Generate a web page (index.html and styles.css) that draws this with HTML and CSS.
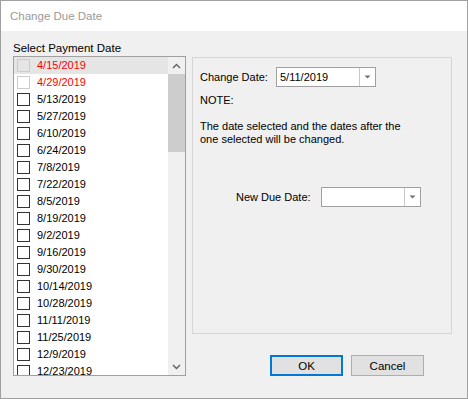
FILE: index.html
```html
<!DOCTYPE html>
<html>
<head>
<meta charset="utf-8">
<link rel="stylesheet" href="styles.css">
</head>
<body>
<div class="window">
  <div class="titlebar">Change Due Date</div>
  <div class="content">
    <div class="left">
      <div class="caption">Select Payment Date</div>
      <div class="listbox">
        <div class="list">
          <div class="row selected disabled"><span class="check"></span><span class="red">4/15/2019</span></div>
          <div class="row disabled"><span class="check"></span><span class="red">4/29/2019</span></div>
          <div class="row"><span class="check"></span><span>5/13/2019</span></div>
          <div class="row"><span class="check"></span><span>5/27/2019</span></div>
          <div class="row"><span class="check"></span><span>6/10/2019</span></div>
          <div class="row"><span class="check"></span><span>6/24/2019</span></div>
          <div class="row"><span class="check"></span><span>7/8/2019</span></div>
          <div class="row"><span class="check"></span><span>7/22/2019</span></div>
          <div class="row"><span class="check"></span><span>8/5/2019</span></div>
          <div class="row"><span class="check"></span><span>8/19/2019</span></div>
          <div class="row"><span class="check"></span><span>9/2/2019</span></div>
          <div class="row"><span class="check"></span><span>9/16/2019</span></div>
          <div class="row"><span class="check"></span><span>9/30/2019</span></div>
          <div class="row"><span class="check"></span><span>10/14/2019</span></div>
          <div class="row"><span class="check"></span><span>10/28/2019</span></div>
          <div class="row"><span class="check"></span><span>11/11/2019</span></div>
          <div class="row"><span class="check"></span><span>11/25/2019</span></div>
          <div class="row"><span class="check"></span><span>12/9/2019</span></div>
          <div class="row"><span class="check"></span><span>12/23/2019</span></div>
        </div>
        <div class="scrollbar">
          <div class="arrow">
            <svg width="9" height="6" viewBox="0 0 9 6"><path d="M1 5 L4.5 1.5 L8 5" fill="none" stroke="#606060" stroke-width="1.4"/></svg>
          </div>
          <div class="thumb"></div>
          <div class="track"></div>
          <div class="arrow">
            <svg width="9" height="6" viewBox="0 0 9 6"><path d="M1 1 L4.5 4.5 L8 1" fill="none" stroke="#606060" stroke-width="1.4"/></svg>
          </div>
        </div>
      </div>
    </div>
    <div class="right">
      <div class="group">
        <div class="field">
          <span class="label">Change Date:</span>
          <div class="combo">
            <span class="value">5/11/2019</span>
            <span class="drop"><svg width="7" height="4" viewBox="0 0 7 4"><path d="M0.5 0.5 L6.5 0.5 L3.5 3.5 Z" fill="#707070"/></svg></span>
          </div>
        </div>
        <div class="note">NOTE:</div>
        <div class="para">The date selected and the dates after the<br>one selected will be changed.</div>
        <div class="field newdue">
          <span class="label2">New Due Date:</span>
          <div class="combo">
            <span class="value"></span>
            <span class="drop"><svg width="7" height="4" viewBox="0 0 7 4"><path d="M0.5 0.5 L6.5 0.5 L3.5 3.5 Z" fill="#707070"/></svg></span>
          </div>
        </div>
      </div>
      <div class="buttons">
        <button class="btn primary">OK</button>
        <button class="btn">Cancel</button>
      </div>
    </div>
  </div>
</div>
</body>
</html>
```
FILE: styles.css
```css
html, body {
  margin: 0;
  padding: 0;
  background: #ffffff;
}
.window {
  width: 468px;
  height: 399px;
  box-sizing: border-box;
  border: 1px solid #a0a0a0;
  display: flex;
  flex-direction: column;
  font-family: "Liberation Sans", Arial, sans-serif;
  font-size: 11px;
  color: #000;
  overflow: hidden;
}
.titlebar {
  height: 30px;
  flex: none;
  background: #ffffff;
  color: #9a9a9a;
  font-size: 11.5px;
  line-height: 30px;
  padding-left: 9px;
}
.content {
  flex: 1;
  background: #f0f0f0;
  display: flex;
  padding-left: 12px;
}
.left {
  width: 173px;
  padding-top: 9px;
  display: flex;
  flex-direction: column;
}
.caption {
  height: 16px;
  line-height: 16px;
  font-size: 11.5px;
}
.listbox {
  height: 320px;
  box-sizing: border-box;
  border: 1px solid #a0a0a0;
  background: #ffffff;
  display: flex;
}
.list {
  flex: 1;
  overflow: hidden;
}
.row {
  height: 17px;
  display: flex;
  align-items: center;
  line-height: 17px;
}
.row.selected {
  background: #e5e5e5;
}
.check {
  width: 13px;
  height: 13px;
  box-sizing: border-box;
  border: 1px solid #333333;
  background: #ffffff;
  margin-left: 3px;
  margin-right: 7px;
  flex: none;
}
.row.disabled .check {
  border-color: #cccccc;
  background: transparent;
}
.red {
  color: #ff0000;
}
.scrollbar {
  width: 17px;
  flex: none;
  background: #f0f0f0;
  display: flex;
  flex-direction: column;
}
.arrow {
  height: 17px;
  display: flex;
  align-items: center;
  justify-content: center;
}
.thumb {
  height: 78px;
  background: #cdcdcd;
}
.track {
  flex: 1;
}
.right {
  margin-left: 6px;
  padding-top: 26px;
  display: flex;
  flex-direction: column;
}
.group {
  width: 260px;
  height: 277px;
  box-sizing: border-box;
  border: 1px solid #d5d5d5;
  padding: 9px 0 0 7px;
}
.field {
  display: flex;
  align-items: center;
}
.label {
  width: 76px;
}
.combo {
  width: 100px;
  height: 20px;
  box-sizing: border-box;
  border: 1px solid #a0a0a0;
  background: #ffffff;
  display: flex;
}
.value {
  flex: 1;
  padding-left: 3px;
  line-height: 18px;
}
.drop {
  width: 15px;
  border-left: 1px solid #c8c8c8;
  display: flex;
  align-items: center;
  justify-content: center;
}
.note {
  margin-top: 7px;
  line-height: 13px;
}
.para {
  margin-top: 13px;
  line-height: 13px;
}
.newdue {
  margin-top: 41px;
  padding-left: 36px;
}
.label2 {
  width: 85px;
}
.newdue .combo {
  height: 20px;
}
.buttons {
  display: flex;
  margin-top: 21px;
  padding-left: 78px;
  gap: 8px;
}
.btn {
  width: 73px;
  height: 21px;
  box-sizing: border-box;
  border: 1px solid #adadad;
  background: #e1e1e1;
  font-family: "Liberation Sans", Arial, sans-serif;
  font-size: 11.5px;
  color: #000;
  padding: 0;
  margin: 0;
}
.btn.primary {
  border: 2px solid #0078d7;
}
```
